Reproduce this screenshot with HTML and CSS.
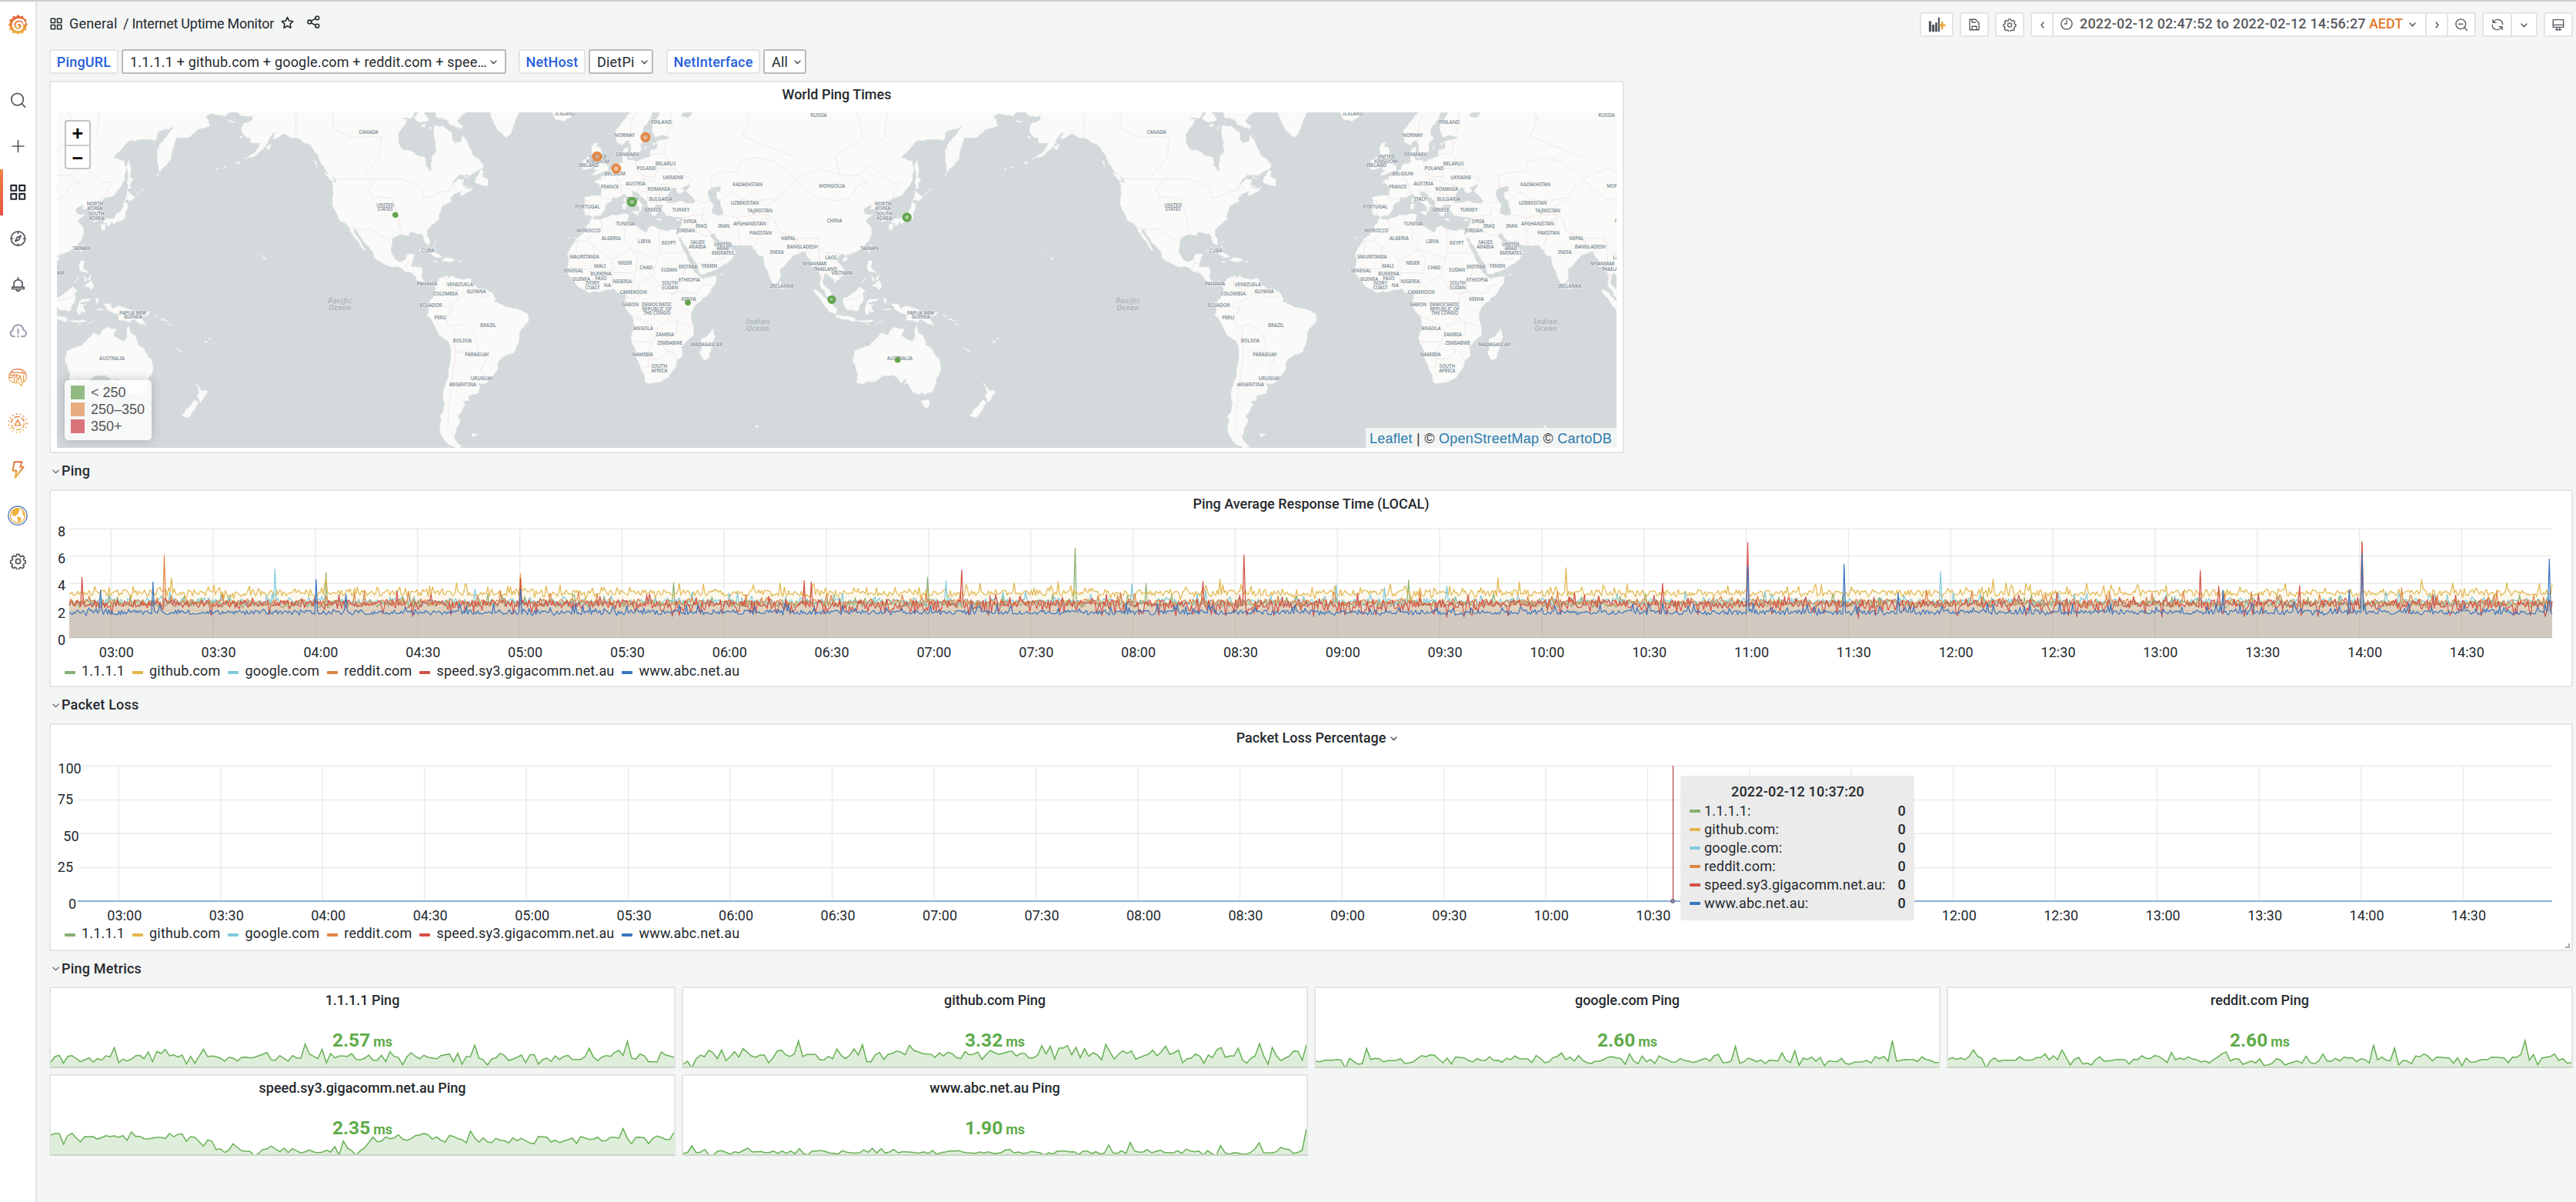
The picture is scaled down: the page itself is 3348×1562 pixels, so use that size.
FILE: index.html
```html
<!DOCTYPE html>
<html lang="en">
<head>
<meta charset="utf-8">
<title>Internet Uptime Monitor</title>
<link rel="stylesheet" href="styles.css">
</head>
<body>
<svg class="defs" width="0" height="0" aria-hidden="true">
  <defs>
    <linearGradient id="warm" x1="0" y1="0" x2="0" y2="1"><stop offset="0" stop-color="#e2593b"/><stop offset="1" stop-color="#f0b93c"/></linearGradient>
    <linearGradient id="warmUser" gradientUnits="userSpaceOnUse" x1="0" y1="1" x2="0" y2="23"><stop offset="0" stop-color="#dd6a3e"/><stop offset="1" stop-color="#edba45"/></linearGradient>
    <symbol id="i-apps" viewBox="0 0 24 24"><path d="M3 3h7v7H3zM14 3h7v7h-7zM3 14h7v7H3zM14 14h7v7h-7z"/></symbol>
    <symbol id="i-down" viewBox="0 0 24 24"><path d="M7 10l5 5 5-5"/></symbol>
    <symbol id="i-left" viewBox="0 0 24 24"><path d="M14 7l-4 5 4 5"/></symbol>
    <symbol id="i-right" viewBox="0 0 24 24"><path d="M10 7l4 5-4 5"/></symbol>
    <symbol id="i-gear" viewBox="0 0 24 24"><path d="M10.2 2.5h3.6l.7 2.7 1.6.7 2.5-1.4 2.4 2.5-1.3 2.4.7 1.6 2.1.8v3.4l-2.5.9-.7 1.6 1.2 2.3-2.4 2.4-2.4-1.2-1.7.6-.9 2.3H10l-.8-2.4-1.6-.7-2.4 1.3-2.4-2.5 1.3-2.3-.7-1.6-2.1-.8v-3.6l2.5-.8.6-1.6-1.2-2.3L5.6 4.500l2.300 1.300 1.700-.7z"/><circle cx="12" cy="12.500" r="3.400"/></symbol>
  </defs>
</svg>
<div class="app">
  <nav class="sidebar">
    <a class="logo"><svg viewBox="0 0 24 24" width="27" height="28"><path fill="url(#warm)" d="M12 .3l2.100 2.400 3.500-1 .8 3.200 3.300 1-.7 3.200 2 2.700-1.900 2.800.8 3.400-3.200 1-1 3.200-3.300-.6L12 23.600l-2.600-2-3.400.7-.9-3.300-3.200-1.200.9-3.300L.6 12l2.200-2.500-.9-3.300L5.200 5.300l.9-3.300 3.500.8z"/><path d="M19.300 10.800c-.8-3.200-3.500-5-6.600-4.800-3.900.2-6.700 3.300-6.400 6.900.3 3.300 3 5.500 6 5.300 2.800-.2 4.800-2.300 4.600-4.800-.2-2.200-1.900-3.700-3.800-3.500-1.700.1-2.800 1.400-2.700 2.800.1 1.100.9 1.800 1.900 1.800" fill="none" stroke="#fff" stroke-width="2.300" stroke-linecap="round"/></svg></a>
    <a class="item"><svg class="ic" viewBox="0 0 24 24"><circle cx="11" cy="11" r="8.500"/><path d="M17 17l5 5"/></svg></a>
    <a class="item"><svg class="ic" viewBox="0 0 24 24"><path d="M12 4v16M4 12h16"/></svg></a>
    <a class="item active"><svg class="ic" viewBox="0 0 24 24"><path d="M2 2h7.500v7.500H2zM14 2h7.500v7.500H14zM2 14h7.500v7.500H2zM14 14h7.500v7.500H14z"/></svg></a>
    <a class="item"><svg class="ic" viewBox="0 0 24 24"><circle cx="12" cy="12" r="10"/><path d="M16 8l-2.500 5.500L8 16l2.500-5.500zM12 2v2.500M12 19.500V22M2 12h2.500M19.500 12H22"/></svg></a>
    <a class="item"><svg class="ic" viewBox="0 0 24 24"><path d="M6 15.500v-4.500a6 6 0 0 1 12 0v4.500M3.500 15.500h17v2.500h-17zM12 2v3M9.500 19c.5 3 4.500 3 5 0"/></svg></a>
    <a class="item muted"><svg class="ic" viewBox="0 0 24 24"><path d="M7 20H5.500a4.500 4.500 0 0 1-1-8.800C4.500 7 8 3.500 12 3.500s7 2.500 7.500 7.500a4.500 4.500 0 0 1-1 9H17M12 9.500v6M12 19v1.500"/></svg></a>
    <a class="item"><svg class="warm brain" viewBox="0 0 24 24"><path d="M13 18.500H8C4.500 18.500 1.500 16 1.500 12S5 2.500 12 2.500 22.500 6.500 22.500 11.500c0 4-2.500 6.500-5.500 7V23l-4-4.500M4.500 6.500h13M2.500 9.500h11M2 12.500h3l2-2M8 18v-5l2.500-2.500L13 15l2-5 1.500 8M11 18v-4M19 18v-8M17 5.500l3.500 3.500"/></svg></a>
    <a class="item"><svg class="warm" viewBox="0 0 24 24"><circle cx="12" cy="12" r="11" stroke-dasharray="1.500 3"/><circle cx="12" cy="12" r="7.800" stroke-dasharray="6 2.200"/><path d="M12 8l3.500 6.500h-7z"/></svg></a>
    <a class="item"><svg class="warm bolt" viewBox="0 0 24 24"><path d="M8 3h9l-2 6h4L9 22l1.500-8.500H6z"/></svg></a>
    <a class="item"><svg viewBox="0 0 24 24" width="26" height="26"><circle cx="12" cy="12" r="11.200" fill="#fff" stroke="#3c66bd" stroke-width="1.100"/><circle cx="12" cy="12" r="8.900" fill="#fff" stroke="#eeb23e" stroke-width="1.200"/><path fill="#eeb23e" d="M5 8c1.500-3 4-4.500 7.500-4.500l2 2.500-2 2 1 1.500-3 1.500-2 2-3-1.500zM11 13l5.500 1.500-2 5-2 .5-.5-3.500zM17.500 5.500l2.500 3.500v4l-2-2z"/></svg></a>
    <a class="item gear"><svg class="ic"><use href="#i-gear"/></svg></a>
  </nav>

  <main class="main">
    <header class="topbar">
      <div class="crumbs">
        <svg class="ic crumb-apps"><use href="#i-apps"/></svg>
        <span class="folder">General</span><span class="dash">/ Internet Uptime Monitor</span>
        <svg class="ic star" viewBox="0 0 24 24"><path d="M12 3l2.800 5.900 6.400.8-4.700 4.400 1.200 6.400L12 17.400l-5.700 3.100 1.200-6.400L2.800 9.700l6.400-.8z"/></svg>
        <svg class="ic share" viewBox="0 0 24 24"><circle cx="5.500" cy="12" r="3"/><circle cx="18" cy="5.500" r="3"/><circle cx="18" cy="18.500" r="3"/><path d="M8 10.500l7.500-4M8 13.500l7.500 4"/></svg>
      </div>
      <div class="tools">
        <div class="btn w-add"><svg viewBox="0 0 24 24" width="26" height="22"><path fill="#55595e" d="M1 7h3.500v15H1zM5.500 12H9v10H5.500zM10 9h3v13h-3zM14 2h2.500v20H14z"/><path fill="#eda33c" d="M18.500 7.500h2.600v4h3.400v3h-3.400v4.500h-2.600v-4.500h-2.500v-3h2.500z"/></svg></div>
        <div class="btn w-sq"><svg class="ic" viewBox="0 0 24 24"><path d="M4 3h10l6 6v12H4zM8 3v5h6M8 21v-6h8v6"/></svg></div>
        <div class="btn w-sq"><svg class="ic"><use href="#i-gear"/></svg></div>
        <div class="group">
          <div class="seg w-prev"><svg class="ic sm"><use href="#i-left"/></svg></div>
          <div class="seg range"><svg class="ic" viewBox="0 0 24 24"><circle cx="12" cy="12" r="9.500"/><path d="M12 6v6H8.500"/></svg><span class="when">2022-02-12 02:47:52 to 2022-02-12 14:56:27</span><span class="tz">AEDT</span><svg class="ic sm"><use href="#i-down"/></svg></div>
          <div class="seg w-next"><svg class="ic sm"><use href="#i-right"/></svg></div>
          <div class="seg w-zoom"><svg class="ic" viewBox="0 0 24 24"><circle cx="11" cy="11" r="8.500"/><path d="M17 17l5 5M7.500 11h7"/></svg></div>
        </div>
        <div class="group">
          <div class="seg w-ref"><svg class="ic" viewBox="0 0 24 24"><path d="M4 3.500v5h5M4.500 8.500C6.500 4.500 11 2.500 15 3.500c3.500 1 6 4 6 8M20 20.500v-5h-5M19.500 15.500c-2 4-6.500 6-10.500 5-3.500-1-6-4-6-8"/></svg></div>
          <div class="seg w-int"><svg class="ic sm"><use href="#i-down"/></svg></div>
        </div>
        <div class="btn w-sq"><svg class="ic" viewBox="0 0 24 24"><path d="M3 3.500h18v13H3zM3 12.500h18M9.500 16.500v4.500M14.500 16.500v4.500M7.500 21h9"/></svg></div>
      </div>
    </header>

    <div class="vars">
      <div class="var"><span class="vlabel">PingURL</span><span class="vvalue wide">1.1.1.1 + github.com + google.com + reddit.com + spee…<svg class="ic sm"><use href="#i-down"/></svg></span></div>
      <div class="var"><span class="vlabel v2">NetHost</span><span class="vvalue host">DietPi<svg class="ic sm"><use href="#i-down"/></svg></span></div>
      <div class="var"><span class="vlabel v3">NetInterface</span><span class="vvalue all">All<svg class="ic sm"><use href="#i-down"/></svg></span></div>
    </div>

    <section class="panel map-panel">
      <h2 class="ptitle">World Ping Times</h2>
      <div class="map">
        <svg id="map" width="2027" height="436" viewBox="74 146 2027 436"></svg>
        <div class="zoomctl"><span>+</span><span>−</span></div>
        <div class="maplegend">
          <div><i class="ok"></i>&lt; 250</div>
          <div><i class="warn"></i>250–350</div>
          <div><i class="bad"></i>350+</div>
        </div>
        <div class="attrib"><a>Leaflet</a> | © <a>OpenStreetMap</a> © <a>CartoDB</a></div>
      </div>
    </section>

    <h3 class="row"><svg class="ic sm"><use href="#i-down"/></svg>Ping</h3>
    <section class="panel ping-panel">
      <h2 class="ptitle">Ping Average Response Time (LOCAL)</h2>
      <svg id="ping" width="3276" height="186" viewBox="66 674 3276 186"></svg>
      <div class="legend"></div>
    </section>

    <h3 class="row"><svg class="ic sm"><use href="#i-down"/></svg>Packet Loss</h3>
    <section class="panel loss-panel">
      <h2 class="ptitle">Packet Loss Percentage<svg class="ic sm"><use href="#i-down"/></svg></h2>
      <svg id="loss" width="3276" height="223" viewBox="66 978 3276 223"></svg>
      <div class="legend"></div>
      <div class="tooltip">
        <div class="ttime">2022-02-12 10:37:20</div>
        <div id="ttrows"></div>
      </div>
      <span class="grip"></span>
    </section>

    <h3 class="row last"><svg class="ic sm"><use href="#i-down"/></svg>Ping Metrics</h3>
    <div class="stats" id="stats"></div>
  </main>
</div>
<script src="app.js"></script>
</body>
</html>
```
FILE: styles.css
```css
* { box-sizing: border-box; }
body { margin: 0; background: #f4f5f5; color: #24292e; font: 400 18px/24px Roboto, "Liberation Sans", sans-serif; letter-spacing: .19px; overflow: hidden; }
.defs { position: absolute; }
.app { display: flex; width: 3348px; height: 1562px; border-top: 2px solid #cbcccc; }
svg { display: block; flex: none; }
.ic { width: 21px; height: 21px; fill: none; stroke: #55595e; stroke-width: 2; stroke-linejoin: round; stroke-linecap: round; }
.ic.sm { width: 17px; height: 17px; }

.sidebar { width: 48px; background: #fff; border-right: 2px solid #e1e3e4; display: flex; flex-direction: column; }
.logo { height: 98px; padding: 16px 0 0 10px; }
.item { height: 60px; display: flex; align-items: center; justify-content: center; }
.item .ic { width: 23px; height: 22px; stroke-width: 1.900; }
.item.active { border-left: 4px solid; border-image: linear-gradient(#ef8442, #e65345) 1; padding-right: 4px; }
.item.active .ic { stroke: #24292e; stroke-width: 2.300; }
.item.muted .ic { stroke: #9a9fb0; stroke-width: 2.200; }
.item.gear { height: 58px; }
.warm { width: 26px; height: 26px; fill: none; stroke: url(#warmUser); stroke-width: 1.400; stroke-linejoin: round; }
.warm.bolt { stroke-width: 1.900; }
.warm.brain { stroke-width: 1.100; }

.main { flex: 1; padding: 0 4px 0 16px; display: flex; flex-direction: column; }
.topbar { height: 62px; display: flex; justify-content: space-between; align-items: flex-start; }
.crumbs { display: flex; align-items: center; height: 58px; }
.crumbs .ic { stroke: #24292e; }
.crumb-apps { width: 18px; height: 18px; margin-right: 8px; }
.folder { width: 70px; }
.dash { letter-spacing: -.25px; width: 204px; white-space: nowrap; }
.crumbs .star { width: 19px; height: 19px; margin-top: -3px; }
.crumbs .share { width: 19px; height: 19px; margin: -5px 0 0 15px; }
.tools { display: flex; gap: 8px; padding-top: 14px; }
.btn, .group { display: flex; height: 32px; background: #fff; border: 2px solid #e3e4e5; border-radius: 3px; align-items: center; justify-content: center; }
.tools .ic:not(.sm) { width: 18px; height: 18px; stroke-width: 1.800; }
.w-add { width: 44px; }
.w-sq { width: 38px; }
.seg { height: 28px; display: flex; align-items: center; justify-content: center; }
.seg + .seg { border-left: 2px solid #e3e4e5; }
.w-prev { width: 26px; }
.w-next { width: 28px; }
.w-zoom { width: 36px; }
.w-ref { width: 35px; }
.w-int { width: 33px; }
.seg.range { width: 485px; justify-content: flex-start; padding: 0 0 2px 8px; font-weight: 500; color: #565a5f; line-height: 28px; }
.when { padding-left: 8px; width: 384px; white-space: nowrap; }
.tz { color: #e0792c; padding-right: 4px; letter-spacing: -.1px; }

.vars { display: flex; height: 32px; }
.var { display: flex; gap: 4px; }
.vlabel { background: #fff; border: 2px solid #e3e4e5; border-radius: 3px; width: 90px; text-align: center; font-weight: 500; color: #2760dc; line-height: 29px; height: 32px; }
.vlabel.v2 { width: 87px; }
.vlabel.v3 { width: 122px; }
.vvalue { background: #fff; border: 2px solid #b9bbbb; border-radius: 3px; height: 32px; line-height: 27px; display: flex; align-items: center; justify-content: space-between; padding: 0 6px 0 9px; white-space: nowrap; }
.vvalue.wide { width: 500px; margin-right: 16px; }
.vvalue.host { width: 84px; margin-right: 17px; padding-right: 1px; }
.vvalue.all { width: 56px; padding-right: 1px; }

.panel { background: #fff; border: 2px solid #e3e5e5; border-radius: 3px; position: relative; }
.ptitle { margin: 0; font: 500 18px/24px Roboto, sans-serif; letter-spacing: 0; text-align: center; display: flex; justify-content: center; align-items: center; }
.ptitle .ic { margin: 0 -19px 0 2px; }
.map-panel { width: 2047px; height: 484px; margin-top: 9px; padding: 4px 8px 0; }
.map-panel .ptitle { height: 35px; padding-bottom: 11px; }
.map { position: relative; width: 2027px; height: 436px; background: #d4dadc; }
.zoomctl { position: absolute; left: 10px; top: 10px; width: 34px; height: 64px; background: #fff; border: 2px solid #c2c4c4; border-radius: 4px; font: bold 25px/30px "Liberation Sans", sans-serif; text-align: center; color: #000; display: grid; }
.zoomctl span + span { border-top: 2px solid #ccc; }
.maplegend { position: absolute; left: 10px; top: 348px; width: 113px; height: 78px; padding: 5px 8px; background: rgba(255,255,255,.82); border-radius: 5px; box-shadow: 0 0 15px rgba(0,0,0,.2); font: 18px/22px "Liberation Sans", sans-serif; letter-spacing: 0; color: #555; }
.maplegend div { display: flex; align-items: center; gap: 8px; }
.maplegend i { width: 18px; height: 18px; }
.ok { background: #92bb84; }
.warn { background: #e8ae82; }
.bad { background: #da747b; }
.attrib { position: absolute; right: 0; bottom: 0; height: 26px; width: 326px; padding-left: 5px; background: rgba(255,255,255,.72); font: 18px/28px "Liberation Sans", sans-serif; letter-spacing: .25px; color: #333; white-space: nowrap; }
.attrib a { color: #2a7aac; }

.row { margin: 0; height: 47px; font: 500 18px/24px Roboto, sans-serif; letter-spacing: .19px; display: flex; align-items: center; padding-bottom: 1px; }
.row.last { height: 46px; }
.row .ic { margin-right: -1px; stroke-width: 1.800; }
.ping-panel { height: 257px; }
.ping-panel .ptitle, .loss-panel .ptitle { height: 36px; padding-top: 2px; padding-bottom: 4px; }
.legend { display: flex; gap: 10px; padding: 0 0 0 18px; height: 24px; line-height: 20px; }
.legend span { display: flex; align-items: center; gap: 8px; }
.legend i { width: 14px; height: 4px; margin-top: 4px; border-radius: 1px; }
.loss-panel { height: 296px; }
.tooltip { position: absolute; left: 2118px; top: 66px; width: 304px; height: 188px; background: #ebebeb; border-radius: 4px; padding: 7px 11px 0 12px; }
.ttime { text-align: center; font-weight: 500; line-height: 27px; }
.tooltip .r { display: flex; align-items: center; height: 24px; }
.tooltip .r i { width: 14px; height: 4px; border-radius: 1px; margin-right: 5px; }
.tooltip .r b { font-weight: 500; margin-left: auto; }
.grip { position: absolute; right: 2px; bottom: 2px; width: 6px; height: 6px; border-right: 2px solid #a5a9ad; border-bottom: 2px solid #a5a9ad; }

.stats { display: grid; grid-template-columns: repeat(4, 814px); gap: 8px; }
.stat { height: 106px; border-bottom-color: #c9d6c6; border-radius: 3px 3px 0 0; overflow: hidden; }
.stat .ptitle { padding-top: 4px; }
.stat .val { position: absolute; left: 0; right: 0; top: 54px; text-align: center; color: #5fab4b; font-weight: 700; font-size: 24.500px; line-height: 28px; letter-spacing: 0; }
.stat .val small { font-size: 18px; margin-left: 4px; font-weight: 700; }
.stat svg { position: absolute; left: 0; bottom: -2px; overflow: visible; }
svg text { font-family: Roboto, sans-serif; }
.axis { font-size: 18px; fill: #24292e; letter-spacing: .05px; }
.grid { stroke: rgba(0,0,0,.08); stroke-width: 1.500; }
.land { fill: #fafaf8; stroke: #fafaf8; stroke-width: .6; stroke-linejoin: round; }
.sea { fill: #d4dadc; }
.border { fill: none; stroke: #f1e8e8; stroke-width: 1; }
svg .place { font: 600 6.200px/1 "Noto Sans", sans-serif; fill: #828f98; text-anchor: middle; paint-order: stroke; stroke: rgba(250,250,248,.75); stroke-width: 1.200px; letter-spacing: -.1px; }
svg .ocean { font: italic 500 9.500px/1 "Noto Sans", sans-serif; fill: #a4adb2; text-anchor: middle; letter-spacing: .5px; }
```
FILE: app.js
```js
const NS = 'http://www.w3.org/2000/svg';
const SERIES = [
  ['1.1.1.1', '#86af70'], ['github.com', '#e2b64a'], ['google.com', '#80cadb'],
  ['reddit.com', '#e08545'], ['speed.sy3.gigacomm.net.au', '#d45046'], ['www.abc.net.au', '#3a76bf']
];

/* ---------- world map (web mercator) ---------- */
const LAND = [
  // North America
  '-166,69 -166,68.3 -163.5,67 -162,66.3 -166,66 -168,65.6 -166.5,64.6 -164.5,64.5 -162,64.4 -161,64.7 -160.8,63.7 -163,63.1 -164.8,63 -166,61.7 -165,60.6 -164,59.9 -162,59.9 -161.8,58.7 -159,58.6 -157.2,58.8 -158,57.6 -160.5,56 -163,55 -164.8,54.6 -162,55.1 -159,55.7 -156,57.3 -154,58.8 -153.5,59.6 -151.8,60.8 -150,61.2 -151.5,59.6 -149,60 -146.5,60.8 -144,60 -140,59.7 -137.5,58.7 -135,58.3 -133,57 -131,55.6 -130,54 -128,52 -127,51 -124.5,49.9 -123,49 -122.5,47.5 -124.7,48.3 -124,46.2 -124.3,43 -124.3,40.4 -123.5,39 -122.5,37.6 -121.8,36.6 -120.6,34.6 -118.5,34 -117.2,32.7 -116,30.5 -115,29.5 -114.2,28.1 -112.4,26.5 -111.5,24.7 -110,22.9 -109.5,23.2 -110.5,24.6 -111.4,26.5 -112.8,28.2 -114.6,30.4 -114.8,31.8 -113.2,31.3 -112,29 -110.5,27.3 -109.2,25.8 -107.5,24.3 -106,22.8 -105.3,21 -105.6,20.3 -104,19 -102,17.9 -100,16.9 -97,15.9 -95,16.2 -93,15.6 -92,14.5 -90,13.8 -87.8,13.2 -87.5,12.6 -86,11.2 -85.8,10 -84,9.3 -83,8.3 -81.5,7.5 -80.3,7.4 -79.7,8.8 -78.3,8.2 -77.5,7.3 -76.5,7.5 -77.3,8.5 -79,9.5 -81.5,8.8 -83,10 -83.7,11.3 -83.4,14.5 -84,15.8 -87,15.9 -88.5,15.8 -88.2,17.8 -87.6,19.5 -86.9,21.4 -90.3,21.1 -90.7,19.4 -92,18.5 -94.3,18.2 -96,19.2 -97.4,21.5 -97.7,24 -97.2,26 -97.2,27.7 -95,29 -93.5,29.7 -91.5,29.4 -89.5,29.1 -89.6,30.2 -87,30.4 -85.3,29.7 -84,30.1 -82.7,28.7 -82.6,27.3 -81.7,25.9 -80.4,25.2 -80.1,26.8 -81.3,29.8 -81.3,31.3 -79.5,33 -77.8,34 -75.7,35.3 -76,37 -75,38.6 -74,40.5 -72,41.3 -70.2,41.7 -70.7,43 -68.8,44.4 -67,44.8 -64.8,45.6 -66,43.6 -63.5,44.6 -61,45.4 -60.3,46.5 -61.5,45.9 -64.3,46.2 -65,47.5 -64.4,48.8 -67,49 -70.5,47 -68,49.2 -66.5,50.2 -61,50.2 -58.5,51.3 -56,52 -55.7,53.3 -58,54.8 -60.5,55.8 -61.8,57.3 -63,58.8 -64.6,60.3 -66,58.8 -68.5,58.5 -69.8,59.5 -70,61 -73.5,62.3 -77.8,62.5 -78,60 -77.3,58.2 -76.7,56.8 -79,54.8 -79.2,52.8 -78.8,51.3 -80.5,51.5 -82,53 -82.3,55.1 -85,55.3 -88.5,56.6 -92.5,57 -94.5,58.8 -94.5,60.5 -93,61.9 -91,63 -90.5,63.8 -94,64 -88,64.2 -86.5,66 -84,67 -86,69',
  // South America
  '-77.5,7.3 -77.3,8.5 -75.5,10.7 -74,11.3 -72,12.2 -71.3,10.9 -70,12 -68,10.8 -65,10.1 -62,10.7 -60.5,8.5 -57.5,6.2 -54,5.8 -51.8,4.5 -50,1.8 -50.5,0 -48,-0.8 -44.3,-2.5 -41,-2.9 -38.5,-3.8 -35.3,-5.3 -34.8,-7.5 -35.5,-9.5 -37.2,-11.3 -38.7,-13 -39,-16 -39.5,-18.5 -41,-21.8 -43.5,-23 -46.5,-24.2 -48.6,-26 -48.8,-28.5 -50.5,-31 -53,-33.5 -55,-34.9 -57.8,-34.4 -58.3,-34.2 -57,-36.2 -57.7,-38.2 -62,-39 -62.3,-40.8 -65,-41 -63.8,-42.5 -65.3,-44.5 -67.3,-46 -65.8,-47.5 -68,-50 -69,-52.3 -68.3,-53.2 -65.3,-54.8 -68,-55.3 -72,-54 -74.5,-52 -75.3,-49 -74.5,-46.8 -75.5,-46.5 -73.5,-44 -73,-42 -73.7,-40 -73.4,-37.2 -71.6,-33 -71.4,-29.8 -70.5,-26 -70.2,-20 -71.5,-17.5 -75.5,-15 -77,-12.3 -79,-8.2 -81.2,-6 -80.3,-3.4 -80.9,-2.2 -80,0.5 -78.8,1.6 -77.3,3.9',
  // Africa
  '-5.9,35.8 -2,35.1 3,36.9 10,37.3 11,36.9 10.5,35.5 10.2,34 13,32.8 15.3,32.2 19,30.3 20,32.2 22,32.9 25,31.6 29,30.9 31,31.5 34.2,31.3 32.5,29.9 33.5,28 35.5,24 37.2,21 38.5,18 39.7,15.2 42,12.8 43.3,11.5 45,10.5 51.2,11.9 50.8,9.4 48,4.5 44.5,1.5 41,-2 39.3,-4.7 39.4,-7 40.5,-10.7 40.6,-15 37,-17.8 34.8,-19.9 35.5,-23.5 32.8,-26 32,-28.9 28.5,-32.8 25.7,-34 20,-34.8 18.4,-34.1 18.2,-31.8 16.5,-28.6 14.7,-25 14.5,-22.5 12.5,-18.5 11.8,-16 13.7,-11 12.3,-6 9.3,-2 9.4,1 9.8,3.5 8.5,4.6 6,4.3 4.4,6.3 1,5.9 -2,4.8 -4.5,5.2 -7.5,4.4 -9.3,5.8 -12.5,7.5 -13.7,9.8 -16.7,12.4 -17.4,14.7 -16.3,19 -17,21 -15.8,24 -13.2,27.7 -10,29.7 -9.7,31.3 -7,33.8',
  // Eurasia
  '-5.6,36.1 -6.4,36.8 -8.9,37 -9.4,38.8 -8.8,41 -9.2,43.1 -5,43.6 -1.7,43.4 -1.2,46 -2.5,47.4 -4.7,48 -3,48.8 -1.6,48.7 -1.7,49.7 0.3,49.6 1.7,50.8 4,51.8 5,53.2 8.5,53.7 8.2,56 9,57.2 10.6,57.6 10.2,56 10,54.6 12,54.2 14.3,53.9 18.5,54.8 21,55.2 21.2,57 23,57 24.3,57.8 23.5,59 28,59.5 30,60 26,60.5 22.8,60 21.5,61.5 22,63 25.3,65 22.3,65.8 20.8,63.8 17.5,62 17.2,60.6 18.8,59.8 16.6,58.5 16.3,56.7 14.2,55.5 12.9,55.5 11.2,59 10.5,59.3 8,58.1 5.6,58.8 5,61.5 9,63.7 13,66 15,69 190,69 190,66 186.5,64.4 180,65 177.5,64.5 179.5,62.5 174,61.7 170,60 164,59.9 163.2,58 162,56 162,54.8 159.8,53 158.3,52.3 156.7,51 155.6,54 155.6,57 159,59.8 163.5,62.3 160.5,61.8 156,61.3 155,59.4 150,59.5 143,59.2 138,56.5 135.3,54.9 140.5,54 141.2,52.2 140.5,48.5 138,46 135,43.5 132,43.1 130.5,42.3 127.5,39.8 129.4,37 129,35.2 126.5,34.4 126.6,37.3 124.9,38 125,39.6 121.5,39 121.8,40.8 118,39.1 119,37.3 122.5,37.2 119.3,35 121.8,32 121.8,30 120,26.3 117,23.5 114,22.3 110.5,21.2 110,20.3 109.6,21.6 107,21.2 105.7,19 108.5,16 109.4,12.5 107,10.4 104.9,8.7 105,10.4 102.3,12.3 100.8,13.4 99.9,12 99.3,9.4 101,6.9 103.4,4.5 104.2,1.4 103.3,1.5 101,3 100.3,5.5 98.3,8 98.7,12 97.6,16.3 95.4,15.8 94.2,16.2 94.4,18.5 92.3,21 91.5,22.6 89,21.8 87,21.4 85,19.6 82.3,16.7 80.2,15.3 80.2,13 79.8,10.3 78,8.2 76.5,9 74.8,13 73,17 72.7,21 70.5,20.8 69,22.3 70,22.9 68,23.7 66.7,25.3 61.5,25.1 57.3,25.8 56.7,27 54.5,26.6 51.5,27.9 50.2,30 48.5,30 48.2,29 50.1,26.7 50.8,25 51.3,26 51.6,24.3 54,24.2 56.3,26.2 56.8,24.2 59.8,22.4 57.8,19 55,17.2 52,15.6 45,12.8 43.4,12.8 42.7,16.5 39.2,21 37,25 34.9,28 35,29.5 34.3,27.8 32.6,29.9 32.6,31.2 34.2,31.3 35,33 36,36 34,36.3 32,36.2 30.5,36.6 28,36.8 26.5,38.3 26.2,39.4 27,40.5 26,40.7 24,40.8 22.8,40.4 23,39 24,37.8 22.9,36.6 21.5,37 21.3,38.3 19.4,40.5 19.5,41.8 16.5,43.4 15,44.7 13.8,45.1 12.3,45.3 12.4,44.2 14,42.6 16,41.8 18.4,40 17,40.4 16.6,38.8 15.7,38 15.9,39.5 14.5,40.8 12,42 10.3,43.5 8.8,44.4 6,43.1 3.2,43.2 3.1,41.9 0.5,40.7 0,38.7 -2,36.8 -4.5,36.7',
  // Australia
  '114,-22 113.5,-26 115.5,-30.5 115.7,-33.3 115,-34.3 118,-35 120,-33.9 123.8,-33.8 126,-32.3 129,-31.7 131.3,-31.5 134,-32.8 135.5,-34.8 137.8,-32.6 137,-35.2 138.3,-34.5 139.7,-36.5 141,-38.1 143.6,-38.8 145,-38 146.3,-39 150,-37.5 151.3,-33.5 153,-31 153.6,-28.3 153,-25.5 150.8,-23.2 149,-20.4 146.5,-19 145.4,-15 143.7,-14.3 142.5,-10.8 141.6,-13 141.7,-16 140.5,-17.6 139,-17.2 135.5,-15 136.8,-12.2 132.6,-11.4 130.7,-12.6 129.5,-14.9 126.8,-13.9 124,-16.3 122.2,-18 121,-19.6 117,-20.7',
  '144.7,-40.8 148.2,-40.9 148,-43 146.8,-43.6 145.5,-42.5',
  '172.8,-34.5 174.8,-36.5 176,-37.6 178.4,-37.6 177,-39.4 175.3,-41.6 174.8,-41.2 173.8,-39.3 174.8,-38 174.2,-36.2', '172.8,-40.6 174.3,-41.7 172.7,-43.6 171,-45.6 169.5,-46.6 166.8,-46 168.5,-44 171,-42.6',
  // New Guinea and Indonesia
  '131,-0.8 134,-0.8 135,-3.3 138,-1.7 141,-2.6 144.8,-3.9 147.8,-6 147,-6.7 150.5,-10.5 147.5,-9.8 144.5,-7.7 143,-9.2 140,-8.2 138,-8.2 138,-5.6 133.5,-3.9 132,-2.8 133.8,-2.300 131.500,-1.500', '148.500,-5.800 152,-4.200 151.500,-5.600 149.500,-6.300', '154.700,-5.500 155.900,-6.700 155,-6.300', '157,-7.500 160.500,-8.500 159,-8.300', '160,-9.500 162,-10.500 160.500,-9.900',
  '95.400,5.600 98,4.500 100.500,2 103.500,-0.500 106,-3 105.800,-5.800 102.300,-4 100,-0.800 98.500,1.800', '105.300,-6.800 106.200,-6 110.800,-6.400 114.400,-7.700 114.300,-8.600 108.500,-7.800', '115,-8.300 119,-8.400 122.800,-8.300 122,-8.900 117,-9',
  '109,1.600 111.200,2.500 114,4.600 116.900,7 119,5.200 117.600,4 118,1 116.300,-1.500 116,-3.800 114.500,-4 110.200,-2.800 109,0', '119.500,-5.500 119,-3 120,0.500 121,1.300 125,1.500 124,0.400 120.500,0.300 120.300,-1 123.300,-0.800 121.500,-2 122.800,-4.500 121.500,-4.700 120.800,-2.800 120.400,-5.500', '123.500,-10.300 127,-8.400 125,-9.200', '127.500,2 128.700,1.500 128,-0.800 127.700,0.500', '127,-3.200 130.800,-3.300 129,-3.600', '119,-9.500 120.800,-10.200 119.500,-9.900',
  '120.500,18.500 122.200,18.500 121.600,15.800 124,13 122,13.800 120.600,13.900 119.900,16.300', '122,11.800 123,11 122.500,9.300 124,10.500 125.500,12.500 125,10.300 122.400,10', '122.200,7.500 123.800,8.500 125.500,9.800 126.500,7.500 125.500,5.700 124,7', '117.200,8.500 119.500,11.300 118.500,9.800',
  '120.200,23 121.500,25.300 121.900,25 120.800,22', '108.700,19.300 110.500,20.100 111,19.500 109.500,18.200', '80,9.700 81.800,7.500 81.300,6.200 80.200,6 79.800,8.200',
  // Japan, Sakhalin
  '130.900,34 132.500,35.500 135.800,35.600 137,37.500 138.800,37.900 140,39.500 140.200,41.200 141.500,41.300 142,39.500 140.900,38 140.800,35.700 138.600,34.700 136.800,34.500 135.700,33.500 134.800,34.600', '129.800,33.300 131.700,33.600 131.400,31.400 130.300,31.200', '132.500,33.600 134.500,34.300 134,33.400 132.900,32.800', '140,41.500 141.500,43.300 141.800,45.400 143.500,44.200 145.300,43.300 143.200,42 141,42.500', '142.700,54.300 143.300,52.500 143,49.300 144.500,49 143,47 143.500,46.200 142,46 142.200,50 141.800,53',
  '145.500,43.600 147.500,44.900 146.300,44.300', '148,45.200 149.800,45.900 148.500,45.500', '155.300,50.200 156.300,50.700 155.800,50',
  // Europe islands
  '-5.600,50.100 1.400,51.200 1.600,52.700 .2,53 -1.500,55 -2,57.500 -4,57.700 -3.200,58.600 -5,58.500 -6,57 -5.500,56 -4.800,54.800 -3.200,54.800 -3.200,53.500 -4.500,53.300 -4.200,52.300 -5,51.800 -3,51.500', '-6,52.200 -6.200,53.500 -5.600,54.600 -7.300,55.300 -8.400,54.500 -10,54.200 -9.300,53 -10.200,51.800 -8.500,51.700', '-24.300,65.500 -22,66.400 -18,66.100 -15,66.200 -13.800,65 -18.500,63.400 -22.700,63.900', '12.500,38 15.500,38.200 15.100,36.700', '8.300,40.900 9.700,41 9.500,39.200 8.500,39', '8.700,42.400 9.500,43 9.400,41.500 8.800,41.700', '23.600,35.500 26.200,35.200 24.800,35', '32.500,35 34.500,35.600 33.500,34.700', '11,55.700 12.500,56 12.200,54.900 11,55.200', '18.200,57.200 19,57.900 18.500,57', '22,58.500 23.300,58.600 22.300,58',
  '49.300,-12 50.400,-15.500 49.600,-17 47.300,-24.800 45.400,-25.500 43.500,-23 44.300,-20 44.200,-16.500 47,-15.200',
  // Americas islands
  '-59.300,48 -56.800,51.500 -55.500,51.300 -56,49.800 -53.300,48.800 -53.500,46.800 -55.800,47', '-64,47 -62,46.400 -64,46.500', '-64.300,49.900 -61.800,49.200 -63.500,49.400', '-85,23 -82,23.200 -78,22.400 -75,20.700 -74.300,20.200 -77.500,19.900 -77.300,20.700 -81.800,22.400', '-74.400,18.600 -73,19.900 -70,19.700 -68.400,18.600 -71,18.100 -72,18.300', '-78.300,18.400 -76.300,18.100 -77.500,17.800', '-67.200,18.500 -65.700,18.400 -66.500,18', '-78.300,25 -77.800,24 -78,24.800', '-77.800,26.800 -77,26.300 -77.500,26.500', '-61.800,10.800 -61,10.700 -61.500,10.100', '-128.300,50.800 -125,50.200 -123.500,48.400 -125.500,48.700', '-133,54.100 -131.700,53.900 -131.500,52.300', '-154.700,57.500 -152.300,58.300 -153.500,56.900', '-168.500,53.500 -166.500,53.900 -167.500,53.200', '-174.500,52.200 -173,52.400 -174,52', '-177.500,51.900 -176.500,52 -177,51.700', '-156,20.100 -155,19.500 -155.800,19', '-156.600,20.900 -156,20.700 -156.500,20.600', '-158.200,21.600 -157.700,21.300 -158.100,21.300', '-159.700,22.200 -159.400,21.900 -159.700,21.900', '-172,63.700 -169,63.300 -171.500,63.300', '-167,60.200 -165.500,60 -166.500,59.800',
  '-80,69 -73,69 -62,66.500 -64,65 -67.500,63.500 -64.800,62.500 -65.500,61.800 -71,62.800 -72.500,63.800 -77,64.300 -77.500,65.200 -73.500,65.300 -73,67 -76,68', '-87,64 -84.500,65.900 -81,64.200 -80.500,63.700 -84,63.200 -85.500,63.400', '-84,62.500 -82,62.900 -82.500,62.200', '-80.200,62 -79.400,62.300 -79.600,61.700',
  '-54,69 -53.500,66.500 -51.500,64 -49,61.500 -45,59.900 -42.800,61 -41,63.500 -38.500,65.700 -33,67.500 -30,69', '-61,-51.500 -58,-51.600 -60,-52.200', '68.800,-49 70.300,-49.200 69.500,-49.700', '164,-20.200 167,-22.200 165.500,-21.500', '177.300,-17.500 178.600,-17.800 177.500,-18.200', '178.800,-16.800 180,-16.300 179,-16.500', '166.600,-14.800 167.200,-15.600 166.700,-15.500', '55.300,-21 55.800,-21.300 55.300,-21.400', '57.400,-20 57.700,-20.400 57.400,-20.500', '52.800,12.700 54.300,12.600 53.500,12.300', '-17,28.300 -16,28.300 -16.800,28', '-14.200,28.600 -13.900,28.300 -14.300,28.100'
];
const SEA = [
  '28,41.5 28.5,43.6 30.5,46.2 33,46 32.6,45.3 33.8,44.4 36.5,45.2 35,46.2 37.5,47 39.2,47.2 37.7,45.6 37,45.2 39,44 41.5,42 40.5,41 37,41.2 34.8,42 31.5,41.3 29,41.2',
  '47,45 49,46.4 53,46.8 53,45.2 51,44.8 51,43 52.8,42 52.8,41 53.8,39 53.9,37 51.5,36.7 49.2,37.5 49,39 49.8,40.4 48,42.5 47.2,44',
  '32,67.2 38,66.2 34.8,64.5 38,64 40,65 40.5,66.2 44,66 44,67.5 41,66.8 38,67.300', '26.500,40.400 29,40.900 27.500,40.700'
];
const BORDERS = [
  '-141,69 -141,60', '-123,49 -95,49 -89,48 -84,46.500 -82.500,43 -79,43.300 -75,45 -71,45.200 -69,47.300 -67,45', '-117,32.700 -111,31.300 -106.500,31.700 -103,29 -100,28 -97.500,26', '-125,69 -124,62 -116,60 -110,60 -102,60 -103,55 -110,50',
  '-104,49 -108,46 -106,43 -97,43 -96,40 -94,36 -93,30', '-92,14.600 -90.500,17.500 -89,17.800', '-72,12 -73,8 -70,6.500 -67,5 -67,1 -70,0 -70,-4 -73,-7 -72,-10 -69,-11 -65,-10 -60,-14 -58,-18 -58,-22 -54,-25 -57,-30 -53,-33', '-80,-3 -75,-1 -70,-4', '-60,8 -60,4 -64,4 -67,1', '-57,6 -56,2 -60,4', '-54,5 -52,3 -56,2', '-69,-11 -69,-17 -68,-22 -62,-22 -58,-22', '-68,-22 -69,-28 -70,-34 -71,-42 -72,-50 -69,-52',
  '-2,35 -1,32 -8,28 -8,27', '-8,27 -13,27 -13,22 -17,21', '-8,27 3,19 12,23.500 9,28 9,33 7.500,34', '12,23.500 24,19.500 25,22 25,31.500', '25,22 37,22', '-5,25 -5,15 -11,15 -16,16', '3,19 4,15 0,12 -4,12 -6,10', '12,23 15,20 14,13 4,13.500 3,6.500', '14,13 12,6 9,4.500', '24,19.500 22,12 24,9 27,5 31,4 35,5 42,4 45,8 48,8', '22,12 15,8 16,3 13,2 9,2', '37,17 36,12 34,10 34,5 31,4 29,-3 31,-8 33,-9 40,-11', '12,-6 17,-8 22,-11 24,-13 22,-18 12,-17.500', '29,-3 29,-9 24,-11', '22,-18 20,-22 20,-28 17,-29', '25,-18 29,-22 31,-22 33,-26', '25,-18 30,-16 33,-14 33,-9', '20,-25 25,-25 29,-22', '34,5 42,-1 41,-2', '34,-1 39,-4.700',
  '-9,42 -7,42 -7,37', '-2,43 3,42.500', '8,44 7,47 6,49 3,51', '7,47 16,47 17,49 23,48 28,47 30,46', '14,54 15,51 19,49.500 23,49.500 24,52 32,52 35,50 40,49 38,47', '23,54 24,52', '21,56 27,56 28,59', '27,56 31,52', '11,59 12,63 20,69', '24,66 28,69', '28,69 31,63 28,60.500', '16,47 15,45 19,45 20,42 24,41.500 26,42', '20,45 23,44 28,44', '42,42 46,41 48,42', '36,36 42,37 45,37 45,40', '35,32 39,32 42,37', '39,32 46,29 48,29', '44,37 46,33 48,30', '43,17 48,18 55,20 56,24', '52,24 56,22', '54,37 61,36 66,37 75,37', '61,36 61,30 62,25', '66,37 70,34 75,36 74,32 70,28 68,24', '49,46 48,50 55,51 61,51 62,54 70,55 77,54 84,51 87,49 83,46 80,43 74,40 74,37 78,35 79,31 88,28 97,28 98,25 101,22 108,21.500', '53,42 58,45 62,43 66,42 70,42 80,43', '87,49 98,52 108,50 116,50 120,48 116,47 112,43 105,42 97,43 88,48', '116,50 121,53 127,50 131,48 135,48 131,43', '88,28 88,26 81,30', '88,26 89,22', '92,24 92,21', '97,28 93,22', '98,25 98,20 99,15 99,10', '101,22 104,18 105,15 102,13', '101,22 105,19 107,15 107,11', '125,40 130,42.500', '60,69 66,64 63,60 78,57 87,55', '113,69 118,60 105,55 108,50', '130,69 128,60 120,56', '141,-2.600 141,-9', '109.500,1 115,1.500 117.500,4'
];
const PLACES = [[734.6,148,'ICELAND'],[859.5,159,'FINLAND'],[1064,150,'RUSSIA'],[812,176,'NORWAY'],[777,204,'UNITED|KINGDOM'],[765,215,'IRELAND'],[815.5,201,'DENMARK'],[865,213,'BELARUS'],[840,218.7,'POLAND'],[799.4,225.7,'BELGIUM'],[874.7,230.7,'UKRAINE'],[792.5,243.3,'FRANCE'],[826,239,'AUSTRIA'],[856.3,245.7,'ROMANIA'],[858.6,259,'BULGARIA'],[822,258.7,'ITALY'],[763.6,269,'PORTUGAL'],[848.5,272.7,'GREECE'],[885,272.7,'TURKEY'],[812.7,291,'TUNISIA'],[896.7,288.3,'SYRIA'],[911.4,294,'IRAQ'],[940.8,294.3,'IRAN'],[891.2,300,'JORDAN'],[765,300,'MOROCCO'],[794.3,310.3,'ALGERIA'],[837.5,313.7,'LIBYA'],[869.2,316,'EGYPT'],[906.4,315,'SAUDI|ARABIA'],[939.4,317.7,'UNITED|ARAB|EMIRATES'],[922,345.7,'YEMEN'],[759.4,334.3,'MAURITANIA'],[779.6,345.7,'MALI'],[812.2,342,'NIGER'],[839.8,348.3,'CHAD'],[869.6,351.3,'SUDAN'],[894,347,'ERITREA'],[744.7,351.7,'SENEGAL'],[781,356,'BURKINA|FASO'],[755.3,362.7,'GUINEA'],[770,368,'IVORY|COAST'],[808.6,366,'NIGERIA'],[789.3,370.7,'NA'],[895.8,364.3,'ETHIOPIA'],[870.6,368.3,'SOUTH|SUDAN'],[823.3,380.3,'CAMEROON'],[895,389,'KENYA'],[819,396,'GABON'],[853.6,396,'DEMOCRATIC|REPUBLIC OF|THE CONGO'],[836,427.3,'ANGOLA'],[864,434.7,'ZAMBIA'],[870.6,446.3,'ZIMBABWE'],[835.2,461,'NAMIBIA'],[918.3,448,'MADAGASCAR'],[856.8,476,'SOUTH|AFRICA'],[971.6,240.3,'KAZAKHSTAN'],[968,263.7,'UZBEKISTAN'],[987.6,274,'TAJIKISTAN'],[974.3,291,'AFGHANISTAN'],[988.6,302.7,'PAKISTAN'],[1024.8,309.7,'NEPAL'],[1042.8,321.3,'BANGLADESH'],[1009.7,327.7,'INDIA'],[1058.8,343.3,'MYANMAR'],[1080,335.3,'LAOS'],[1072.6,350,'THAILAND'],[1094.2,355,'VIETNAM'],[1015.7,371.7,'SRI LANKA'],[1081.3,242,'MONGOLIA'],[1084.5,287,'CHINA'],[1147.5,265,'NORTH|KOREA'],[1149.3,278.3,'SOUTH|KOREA'],[1130,322.7,'TAIWAN'],[1196.6,406.7,'PAPUA NEW|GUINEA'],[1169.5,466,'AUSTRALIA'],[479,172.3,'CANADA'],[500.5,266.7,'UNITED|STATES'],[555.8,326,'CUBA'],[555,368.7,'PANAMA'],[597.8,370.3,'VENEZUELA'],[578.6,381.7,'COLOMBIA'],[619,379.3,'GUYANA'],[560,397,'ECUADOR'],[572.3,412.7,'PERU'],[634.4,422.7,'BRAZIL'],[601,442.7,'BOLIVIA'],[620,461.3,'PARAGUAY'],[626.3,492.3,'URUGUAY'],[601.3,499.7,'ARGENTINA']];
const OCEANS = [[985,418,'Indian|Ocean'],[442,391,'Pacific|Ocean']];
const PINS = [[838.9,178.3,1,'#e28743'],[776,203.3,1,'#e28743'],[800.8,219,1,'#e28743'],[821.4,262.3,1,'#61a44b'],[1178.7,282.3,.8,'#61a44b'],[1080.9,389.3,.5,'#61a44b'],[894,393.3,0,'#61a44b'],[1166.7,467.7,0,'#61a44b'],[513.8,279.3,0,'#61a44b']];

const R = 1024 / (2 * Math.PI);
const px = p => {
  const [lon, lat] = p.split(',').map(Number);
  return [786 + lon / 360 * 1024, 392.7 - R * Math.log(Math.tan(Math.PI / 4 + lat * Math.PI / 360))];
};
let seed = 7;
const rnd = () => (seed = (seed * 16807) % 2147483647) / 2147483647;
/* subdivide coast segments a little so shorelines are irregular */
function coast(str, close, amp) {
  const pts = str.split(' ').map(px), out = [];
  const n = pts.length;
  for (let i = 0; i < (close ? n : n - 1); i++) {
    const a = pts[i], b = pts[(i + 1) % n];
    out.push(a);
    const dx = b[0] - a[0], dy = b[1] - a[1], len = Math.hypot(dx, dy);
    const k = len > 200 ? 1 : Math.floor(len / 3);
    for (let j = 1; j < k; j++) {
      const t = j / k, o = (rnd() - .5) * amp;
      out.push([a[0] + dx * t - dy / len * o, a[1] + dy * t + dx / len * o]);
    }
  }
  if (!close) out.push(pts[n - 1]);
  return 'M' + out.map(p => p[0].toFixed(1) + ' ' + p[1].toFixed(1)).join('L') + (close ? 'Z' : '');
}
const multi = (x, y, s, cls, lh) => s.split('|').map((t, i) => `<text class="${cls}" x="${x}" y="${y + i * lh}">${t}</text>`).join('');
document.getElementById('map').innerHTML =
  '<defs><g id="world">' +
  `<path class="land" d="${LAND.map(s => coast(s, true, 1.9)).join('')}"/>` +
  `<path class="sea" d="${SEA.map(s => coast(s, true, 1.200)).join('')}"/>` +
  `<path class="border" d="${BORDERS.map(s => coast(s, false, 1.500)).join('')}"/>` +
  PLACES.map(p => multi(p[0], p[1] + 2, p[2], 'place', 5.600)).join('') +
  OCEANS.map(p => multi(p[0], p[1] + 3, p[2], 'ocean', 8.800)).join('') +
  '</g></defs>' +
  [-1024, 0, 1024].map(d => `<use href="#world" x="${d}"/>`).join('') +
  PINS.map(([x, y, k, c]) => k ? `<circle cx="${x}" cy="${y}" r="${k * 1.800 + 2.900}" fill="${c}" fill-opacity=".5" stroke="${c}" stroke-width="3.600"/>` : `<circle cx="${x}" cy="${y}" r="3.800" fill="${c}"/>`).join('');

/* ---------- time series ---------- */
const times = i => String(3 + (i >> 1)).padStart(2, '0') + (i % 2 ? ':30' : ':00');
function frame(x0, x1, ys, gx, step, ty, off) {
  let g = `<path class="grid" fill="none" d="${ys.map(y => `M${x0} ${y[0]}H${x1}`).join('')}`;
  for (let i = 0; i < 24; i++) g += `M${gx + i * step} ${ys[0][0]}V${ys[ys.length - 1][0]}`;
  g += '"/>';
  for (const [, label, lx, ly] of ys) g += `<text class="axis" text-anchor="middle" x="${lx}" y="${ly + 6.5}">${label}</text>`;
  for (let i = 0; i < 24; i++) g += `<text class="axis" text-anchor="middle" x="${gx + i * step + off}" y="${ty + 6.5}">${times(i)}</text>`;
  return g;
}
const SPIKES = [
  [[424.6,4.8],[876,4.05],[1205,4.45],[1396.7,6.6],[1489,4],[1830,4.25],[745,3.2]],
  [[223,4.4],[424.6,4.4],[676,4.75],[593,4.05],[1014,4.05],[728,3.9],[1273,4],[1376,4.15],[1586,4.3],[1807,3.95],[1946,4.4],[1974,4.1],[2036,5.15],[2590,4.3],[2633,4],[2971,4],[3147.5,4.3],[2360,3.95],[3317,4],[279,3.9]],
  [[356.5,5.05],[618,3.6],[1230,4.2],[1471,4],[1737,3.9],[1800,3.7],[1881,3.8],[2522,4.9],[3102,3.4]],
  [[212.7,6.05],[650,3.5],[473,3.45],[3069,7.1],[2504,3.5],[3122,3.7]],
  [[106.8,4.45],[676,4.4],[516.5,3.45],[1046,4.2],[1054.5,4.1],[1249.5,5],[1563.5,4.15],[1616.8,6.1],[2160,4],[2271.4,7],[2860,4.95],[2884,3.8],[2989,3.85],[3069,7]],
  [[130,3.5],[198,4.1],[410,4.3],[450.5,3.2],[676,3.6],[2271.4,5.3],[2396,5.4],[2890,3.5],[2466,3.3],[3053.5,3.55],[3069,6.2],[3313,5.8]]
];
/* per series: centre, noise, peak chance, peak height */
const SHAPE = [[2.5,.3,.07,.6],[3.3,.3,.14,.6],[2.65,.32,.08,.6],[2.6,.3,.07,.7],[2.5,.36,.09,.7],[1.87,.22,.16,.6]];
const Y = v => 829 - v * 17.7;
let g = frame(90, 3317, [[687.3,8,80,690],[722.5,6,80,725.7],[758.3,4,80,760.7],[793.6,2,80,796.7],[829,0,80,831.7]], 144.3, 132.83, 847, 7);
SERIES.forEach(([, color], s) => {
  const [base, noise, pk, ph] = SHAPE[s], n = 1750, step = 3227 / n, v = [];
  for (let i = 0; i <= n; i++) {
    let y = base + (rnd() - .5) * 2 * noise * (rnd() * .4 + .6);
    if (rnd() < pk) y += rnd() * ph;
    if (s === 1 && rnd() < .07) y -= .35 * rnd();
    if (s === 4) {
      const x = 90 + i * step, dip = x > 850 && x < 1950 ? .3 : x > 1950 ? .14 : .05;
      if (rnd() < dip) y -= .35 + rnd() * .4;
    }
    v.push(y);
  }
  SPIKES[s].forEach(([x, h]) => { v[Math.min(n, Math.round((x - 90) / step))] = h; });
  const d = v.map((y, i) => (90 + i * step).toFixed(1) + ' ' + Y(y).toFixed(1)).join('L');
  g += `<path d="M90 829L${d}L3317 829Z" fill="${color}" fill-opacity=".1"/><path d="M${d}" fill="none" stroke="${color}" stroke-width="1.200" stroke-linejoin="round"/>`;
});
document.getElementById('ping').innerHTML = g;

document.getElementById('loss').innerHTML =
  frame(101, 3317, [[995.3,100,90.5,998],[1039.500,75,85,1038],[1083.300,50,92.500,1086],[1127.500,25,85,1126],[1171,0,94,1174]], 154.300, 132.470, 1189, 7.500) +
  '<path d="M101 1171H3317" stroke="#8fb0d8" stroke-width="2.200"/><path d="M2174.500 995V1171" stroke="#b3403c" stroke-width="1.200"/><circle cx="2174" cy="1171" r="2.600" fill="#8d7f9c" stroke="#6c6378" stroke-width=".8"/>';

document.querySelectorAll('.legend').forEach(el => {
  el.innerHTML = SERIES.map(([n, c]) => `<span><i style="background:${c}"></i>${n}</span>`).join('');
});
document.getElementById('ttrows').innerHTML = SERIES.map(([n, c]) => `<div class="r"><i style="background:${c}"></i>${n}:<b>0</b></div>`).join('');

/* ---------- stat panels: sparkline depth below a per-panel baseline, in thirds of a pixel ---------- */
const STATS = [
  ['1.1.1.1', '2.57', 443, '420,398,393,424,397,394,406,418,411,403,419,406,412,395,399,363,422,408,415,408,395,393,406,380,418,378,386,370,395,391,400,392,427,397,424,396,369,398,396,399,404,416,401,404,415,401,400,403,401,395,389,382,411,412,394,405,416,394,404,404,349,388,397,406,369,423,386,403,396,396,397,387,409,411,405,392,412,412,393,418,379,397,402,430,399,383,397,407,393,401,403,407,394,391,388,418,385,428,398,397,354,404,411,431,407,403,385,394,414,408,401,392,422,392,390,428,410,404,417,395,409,398,393,409,409,409,398,366,400,414,400,394,397,382,374,394,338,404,408,388,395,418,418,419,380,392,396,401'],
  ['github.com', '3.32', 353, '338,326,352,318,303,308,283,294,316,282,324,309,289,310,277,291,306,311,302,302,333,314,287,283,301,308,298,247,308,300,300,300,321,321,307,317,278,303,316,303,278,302,262,328,328,301,292,320,299,296,286,291,301,264,284,289,296,298,299,311,294,305,291,297,312,316,289,301,299,291,319,299,284,294,299,295,290,287,306,296,296,313,313,303,265,298,268,318,275,275,265,301,272,312,277,307,293,301,321,261,291,318,298,286,296,286,318,311,304,299,283,305,289,267,299,293,283,332,317,314,298,306,334,302,312,282,273,311,306,306,275,321,334,314,305,257,306,338,273,306,324,314,306,286,287,322,262'],
  ['google.com', '2.60', 533, '505,509,503,502,502,499,502,533,495,508,518,515,457,500,495,496,509,504,504,503,496,515,513,509,496,484,489,481,483,498,512,494,517,490,491,493,503,509,496,502,504,489,503,502,510,495,500,486,496,497,497,511,484,494,512,508,492,487,474,500,490,505,484,503,512,515,506,506,499,490,489,493,496,518,478,505,516,486,508,499,515,485,495,501,510,509,495,504,506,511,507,500,495,506,484,480,511,511,505,448,514,508,494,500,508,501,515,502,503,505,474,503,511,465,522,494,499,490,506,491,524,505,507,508,495,515,518,510,509,508,503,513,488,497,487,506,426,506,503,499,500,500,507,489,500,503,511,511'],
  ['reddit.com', '2.60', 533, '499,492,499,493,500,487,462,487,495,533,505,493,507,502,502,503,502,489,501,502,501,492,492,478,501,485,500,462,490,521,499,492,517,513,521,500,489,505,505,503,499,500,501,517,499,500,485,495,496,484,487,498,511,472,501,493,500,489,498,500,509,505,513,500,490,478,469,505,497,497,518,512,505,513,497,523,520,514,496,503,521,514,509,505,514,487,511,516,506,478,506,506,495,505,490,493,493,508,496,500,513,442,501,490,502,504,455,521,503,505,516,486,489,478,487,505,490,490,493,493,514,493,524,494,509,510,503,499,501,490,491,492,493,512,490,491,480,426,502,480,520,494,490,488,478,503,496,514,511'],
  ['speed.sy3.gigacomm.net.au', '2.35', 785, '704,698,698,740,706,697,715,730,710,711,710,720,714,706,710,707,713,706,725,692,709,709,718,719,716,713,713,718,698,711,700,700,729,710,713,730,747,723,728,761,757,772,763,738,752,765,767,768,785,776,760,758,747,758,769,755,772,757,766,774,769,762,770,773,771,763,770,749,783,727,755,765,784,765,754,733,712,730,728,711,718,715,703,720,725,718,706,704,697,703,720,711,724,732,706,709,718,722,734,688,715,732,715,731,733,717,724,726,735,715,726,716,726,735,738,710,711,712,731,724,734,727,722,716,737,710,715,721,720,712,727,725,713,713,716,679,717,738,713,712,715,738,717,708,713,721,721,693'],
  ['www.abc.net.au', '1.90', 695, '685,682,656,683,681,670,692,691,677,675,682,688,679,683,674,665,679,679,678,682,682,676,686,676,686,676,687,667,686,691,676,676,674,678,684,685,688,675,681,683,684,684,672,681,666,684,667,684,680,670,683,679,679,681,683,684,679,686,675,689,682,680,676,676,675,680,683,684,685,680,684,679,685,685,682,672,670,684,680,685,684,678,681,683,692,683,688,677,676,676,680,679,690,677,676,686,679,688,684,653,684,685,675,686,643,676,681,680,671,683,678,673,682,682,684,675,685,669,676,679,676,692,675,687,695,655,682,690,683,684,688,688,682,668,644,682,683,684,679,662,668,671,685,682,673,590']
];
document.getElementById('stats').innerHTML = STATS.map(([name, val, base, raw]) => {
  const v = raw.split(',').map(Number), n = v.length;
  const d = v.map((y, i) => (i * 810 / (n - 1)).toFixed(1) + ' ' + (40 - (base - y) / 3).toFixed(1)).join('L');
  return `<section class="panel stat"><svg width="810" height="40" viewBox="0 0 810 40"><path d="M0 40L${d}L810 40Z" fill="#5fab4b" fill-opacity=".2"/><path d="M${d}" fill="none" stroke="#67b155" stroke-width="1.500"/></svg><h2 class="ptitle">${name} Ping</h2><div class="val">${val}<small>ms</small></div></section>`;
}).join('');
```
